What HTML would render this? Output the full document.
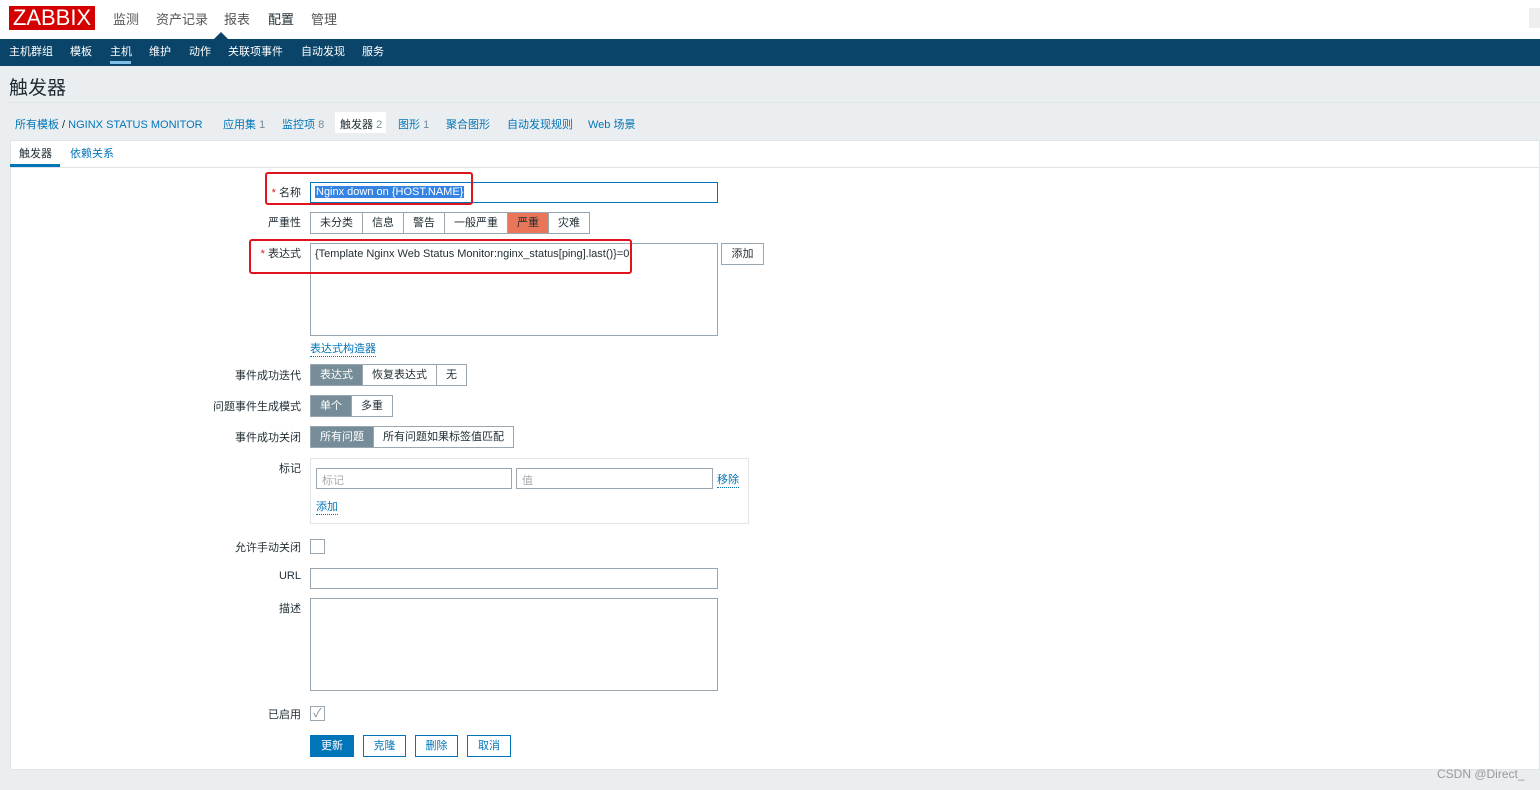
<!DOCTYPE html>
<html><head><meta charset="utf-8"><style>
*{box-sizing:border-box;margin:0;padding:0}
body{width:1540px;height:790px;background:#ebeef0;font-family:"Liberation Sans","Noto Sans CJK SC",sans-serif;font-size:11px;color:#1f2c33;position:relative;overflow:hidden}
.a{position:absolute}
.top{left:0;top:0;width:1540px;height:39px;background:#fff}
.logo{left:9px;top:6px;width:86px;height:24px;background:#d40000;color:#fff;font-size:22px;line-height:24px;text-align:center;letter-spacing:0px}
.tm{top:9px;font-size:13px;color:#555}
.nav{left:0;top:39px;width:1540px;height:27px;background:#0b4469}
.nv{top:43px;color:#fff;font-size:11px}
.lnk{color:#0275b8}
.panel{left:10px;top:140px;width:1530px;height:630px;background:#fff;border:1px solid #dfe4e7}
.lbl{width:301px;left:0;text-align:right;font-size:11px}
.inp{border:1px solid #9aa7b0;background:#fff}
.seg{display:flex;border:1px solid #9aa7b0;height:22px}
.seg span{padding:0 9px;line-height:20px;border-right:1px solid #9aa7b0;font-size:11px}
.seg span:last-child{border-right:none}
.seg .on{background:#768d99;color:#fff}
.red{border:2px solid #e0141e;border-radius:3px}
.btn{height:22px;border:1px solid #0275b8;color:#0275b8;background:#fff;line-height:20px;text-align:center;font-size:11px}
</style></head><body>
<div class="a top"></div>
<div class="a logo">ZABBIX</div>
<div class="a tm" style="left:113px">监测</div>
<div class="a tm" style="left:156px">资产记录</div>
<div class="a tm" style="left:224px">报表</div>
<div class="a tm" style="left:268px;color:#1f2c33">配置</div>
<div class="a tm" style="left:311px">管理</div>
<div class="a" style="left:1529px;top:8px;width:11px;height:20px;background:#eee"></div>
<div class="a" style="left:214px;top:32px;width:0;height:0;border-left:7px solid transparent;border-right:7px solid transparent;border-bottom:7px solid #0b4469"></div>
<div class="a nav"></div>
<div class="a nv" style="left:9px">主机群组</div>
<div class="a nv" style="left:70px">模板</div>
<div class="a nv" style="left:110px">主机</div>
<div class="a" style="left:110px;top:61px;width:21px;height:3px;background:#7fc0e8"></div>
<div class="a nv" style="left:149px">维护</div>
<div class="a nv" style="left:189px">动作</div>
<div class="a nv" style="left:228px">关联项事件</div>
<div class="a nv" style="left:301px">自动发现</div>
<div class="a nv" style="left:362px">服务</div>
<div class="a" style="left:9px;top:73px;font-size:19px;color:#1f2c33">触发器</div>
<div class="a" style="left:9px;top:102px;width:1531px;height:1px;background:#dfe4e7"></div>
<div class="a" style="left:15px;top:116px;font-size:11px" ><span class="lnk">所有模板</span> / <span class="lnk">NGINX STATUS MONITOR</span></div>
<div class="a lnk" style="left:223px;top:116px">应用集 <span style="color:#768d99">1</span></div>
<div class="a lnk" style="left:282px;top:116px">监控项 <span style="color:#768d99">8</span></div>
<div class="a" style="left:335px;top:112px;width:51px;height:21px;background:#fff"></div>
<div class="a" style="left:340px;top:116px">触发器 <span style="color:#768d99">2</span></div>
<div class="a lnk" style="left:398px;top:116px">图形 <span style="color:#768d99">1</span></div>
<div class="a lnk" style="left:446px;top:116px">聚合图形</div>
<div class="a lnk" style="left:507px;top:116px">自动发现规则</div>
<div class="a lnk" style="left:588px;top:116px">Web 场景</div>
<div class="a panel"></div>
<div class="a" style="left:10px;top:167px;width:1530px;height:1px;background:#dfe4e7"></div>
<div class="a" style="left:19px;top:145px">触发器</div>
<div class="a" style="left:10px;top:164px;width:50px;height:3px;background:#0275b8"></div>
<div class="a lnk" style="left:70px;top:145px">依赖关系</div>

<div class="a lbl" style="top:184px"><span style="color:#e0141e">*</span> 名称</div>
<div class="a inp" style="left:310px;top:182px;width:408px;height:21px;border-color:#0275b8"></div>
<div class="a" style="left:315px;top:186px;background:#3584e4;color:#fff;padding:0 1px;line-height:12px">Nginx down on {HOST.NAME}</div>
<div class="a red" style="left:265px;top:172px;width:208px;height:33px"></div>

<div class="a lbl" style="top:214px">严重性</div>
<div class="a seg" style="left:310px;top:212px"><span>未分类</span><span>信息</span><span>警告</span><span>一般严重</span><span style="background:#e97659">严重</span><span>灾难</span></div>

<div class="a lbl" style="top:245px"><span style="color:#e0141e">*</span> 表达式</div>
<div class="a inp" style="left:310px;top:243px;width:408px;height:93px"></div>
<div class="a" style="left:315px;top:248px">{Template Nginx Web Status Monitor:nginx_status[ping].last()}=0</div>
<div class="a red" style="left:249px;top:239px;width:383px;height:35px"></div>
<div class="a" style="left:721px;top:243px;width:43px;height:22px;border:1px solid #9aa7b0;text-align:center;line-height:20px">添加</div>
<div class="a lnk" style="left:310px;top:340px;border-bottom:1px dotted #0275b8">表达式构造器</div>

<div class="a lbl" style="top:367px">事件成功迭代</div>
<div class="a seg" style="left:310px;top:364px"><span class="on">表达式</span><span>恢复表达式</span><span>无</span></div>
<div class="a lbl" style="top:398px">问题事件生成模式</div>
<div class="a seg" style="left:310px;top:395px"><span class="on">单个</span><span>多重</span></div>
<div class="a lbl" style="top:429px">事件成功关闭</div>
<div class="a seg" style="left:310px;top:426px"><span class="on">所有问题</span><span>所有问题如果标签值匹配</span></div>

<div class="a lbl" style="top:460px">标记</div>
<div class="a" style="left:310px;top:458px;width:439px;height:66px;border:1px solid #e1e5e8"></div>
<div class="a inp" style="left:316px;top:468px;width:196px;height:21px;color:#aaa;padding:3px 5px">标记</div>
<div class="a inp" style="left:516px;top:468px;width:197px;height:21px;color:#aaa;padding:3px 5px">值</div>
<div class="a lnk" style="left:717px;top:471px;border-bottom:1px dotted #0275b8">移除</div>
<div class="a lnk" style="left:316px;top:498px;border-bottom:1px dotted #0275b8">添加</div>

<div class="a lbl" style="top:539px">允许手动关闭</div>
<div class="a inp" style="left:310px;top:539px;width:15px;height:15px"></div>
<div class="a lbl" style="top:570px">URL</div>
<div class="a inp" style="left:310px;top:568px;width:408px;height:21px"></div>
<div class="a lbl" style="top:600px">描述</div>
<div class="a inp" style="left:310px;top:598px;width:408px;height:93px"></div>
<div class="a lbl" style="top:706px">已启用</div>
<div class="a inp" style="left:310px;top:706px;width:15px;height:15px;color:#768d99;font-size:12px;line-height:13px;text-align:center">✓</div>

<div class="a btn" style="left:310px;top:735px;width:44px;background:#0275b8;color:#fff">更新</div>
<div class="a btn" style="left:363px;top:735px;width:43px">克隆</div>
<div class="a btn" style="left:415px;top:735px;width:43px">删除</div>
<div class="a btn" style="left:467px;top:735px;width:44px">取消</div>
<div class="a" style="left:1437px;top:767px;color:#999;font-size:12px">CSDN @Direct_</div>
</body></html>
